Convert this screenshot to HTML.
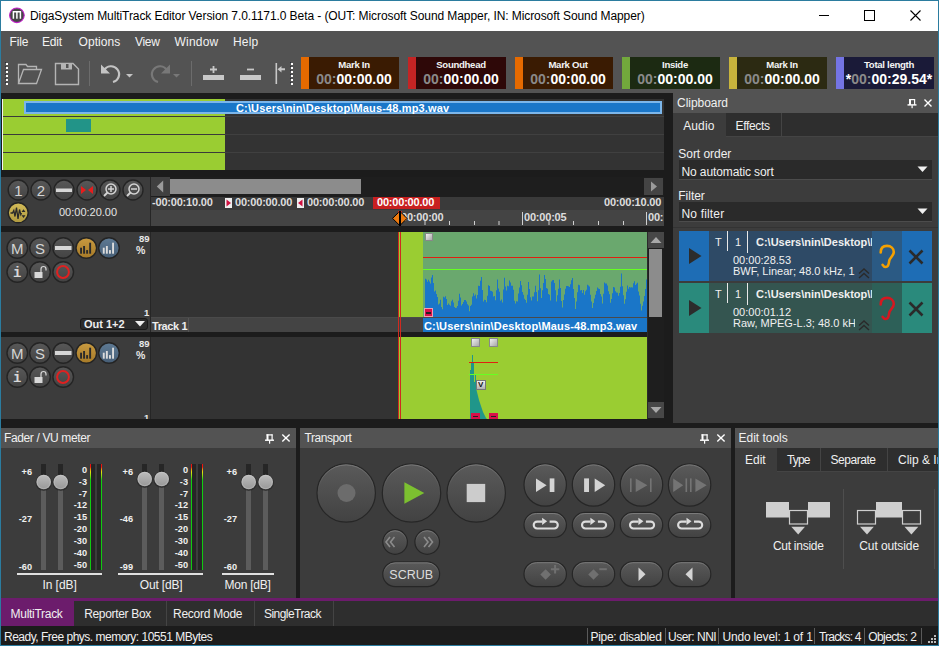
<!DOCTYPE html>
<html><head><meta charset="utf-8">
<style>
*{margin:0;padding:0;box-sizing:border-box}
html,body{width:939px;height:646px;overflow:hidden;background:#1c1c1c;font-family:"Liberation Sans",sans-serif;position:relative}
.a{position:absolute}
.t{position:absolute;white-space:nowrap;line-height:1}
.clab{font-size:9.6px;font-weight:bold;color:#f4f4f4;text-align:center;letter-spacing:-0.3px}
.ctim{font-size:14px;font-weight:bold;color:#fff;text-align:center}
.rl{font-size:11px;font-weight:bold;color:#dedede;letter-spacing:-0.2px}
.pct{font-size:9.5px;font-weight:bold;color:#e8e8e8}
.ci{font-size:11px;color:#f0f0f0}
.fl{font-size:9.2px;font-weight:bold;color:#f0f0f0}
</style></head><body>
<svg width="0" height="0" style="position:absolute"><defs>
 <linearGradient id="gb" x1="0" y1="0" x2="0" y2="1"><stop offset="0" stop-color="#585858"/><stop offset="1" stop-color="#434343"/></linearGradient>
 <linearGradient id="go" x1="0" y1="0" x2="0" y2="1"><stop offset="0" stop-color="#c89a40"/><stop offset="1" stop-color="#a67a28"/></linearGradient>
 <linearGradient id="gbl" x1="0" y1="0" x2="0" y2="1"><stop offset="0" stop-color="#5e7a94"/><stop offset="1" stop-color="#465e76"/></linearGradient>
</defs></svg>
<!-- title bar -->
<div class="a" style="left:1px;top:1px;width:937px;height:30px;background:#fff"></div>
<svg class="a" style="left:8px;top:6px" width="18" height="18" viewBox="0.1 -0.3 18 18">
 <circle cx="9" cy="9" r="7.3" fill="#474747" stroke="#c020c8" stroke-width="1.1"/>
 <path d="M5.5 12.5V5.5H12.5V12.5M9 5.5V12.5" stroke="#fff" stroke-width="1.5" fill="none"/>
</svg>
<div class="t" style="left:30px;top:10px;font-size:12px;letter-spacing:-0.08px;color:#000" id="ttl" >DigaSystem MultiTrack Editor Version 7.0.1171.0 Beta - (OUT: Microsoft Sound Mapper, IN: Microsoft Sound Mapper)</div>
<div class="a" style="left:819px;top:15px;width:10px;height:1px;background:#000"></div>
<div class="a" style="left:864px;top:10px;width:11px;height:11px;border:1px solid #000"></div>
<svg class="a" style="left:909px;top:9px" width="13" height="13" viewBox="0 0 13 13"><path d="M1.5 1.5L11.5 11.5M11.5 1.5L1.5 11.5" stroke="#000" stroke-width="1.1"/></svg>
<!-- menu + toolbar -->
<div class="a" style="left:1px;top:31px;width:937px;height:62px;background:#535353"></div>
<div class="t" style="left:9.5px;top:36px;font-size:12px;color:#f2f2f2;letter-spacing:-0.17px">File</div>
<div class="t" style="left:42.0px;top:36px;font-size:12px;color:#f2f2f2;letter-spacing:-0.17px">Edit</div>
<div class="t" style="left:78.5px;top:36px;font-size:12px;color:#f2f2f2;letter-spacing:0.08px">Options</div>
<div class="t" style="left:135.0px;top:36px;font-size:12px;color:#f2f2f2;letter-spacing:-0.33px">View</div>
<div class="t" style="left:174.5px;top:36px;font-size:12px;color:#f2f2f2;letter-spacing:0.2px">Window</div>
<div class="t" style="left:233.0px;top:36px;font-size:12px;color:#f2f2f2;letter-spacing:0.17px">Help</div>
<!-- toolbar icons -->
<svg class="a" style="left:0;top:52px" width="300" height="40" viewBox="0 52 300 40">
 <g fill="#fff"><rect x="6" y="63" width="2" height="2"/><rect x="6" y="67" width="2" height="2"/><rect x="6" y="71" width="2" height="2"/><rect x="6" y="75" width="2" height="2"/><rect x="6" y="79" width="2" height="2"/><rect x="6" y="83" width="2" height="2"/></g><g fill="#2a2e3a"><rect x="5" y="62" width="1" height="1"/><rect x="5" y="66" width="1" height="1"/><rect x="5" y="70" width="1" height="1"/><rect x="5" y="74" width="1" height="1"/><rect x="5" y="78" width="1" height="1"/><rect x="5" y="82" width="1" height="1"/></g>
 <path d="M18.5 83.5V64.5H26L27.5 66.5H36.5V69.5M18.5 83.5L23.5 69.5H41.5L36.5 83.5Z" fill="none" stroke="#b4b4b4" stroke-width="1.3"/>
 <path d="M55.5 63.5H73L78.5 69V84.5H55.5Z" fill="none" stroke="#b4b4b4" stroke-width="1.4"/>
 <rect x="61" y="63" width="11" height="6.5" fill="#b4b4b4"/><rect x="66" y="64" width="2.5" height="4" fill="#535353"/>
 <rect x="89" y="61" width="1" height="25" fill="#6c6c6c"/>
 <path d="M104 70.5A8 8 0 1 1 113 82" fill="none" stroke="#c4c4c4" stroke-width="2.2"/>
 <path d="M101 64.5V73.5H110Z" fill="#c4c4c4"/>
 <path d="M126 74H133L129.5 77.5Z" fill="#c4c4c4"/>
 <path d="M167 70.5A8 8 0 1 0 158 82" fill="none" stroke="#787878" stroke-width="2.2"/>
 <path d="M170 64.5V73.5H161Z" fill="#787878"/>
 <path d="M173 74H180L176.5 77.5Z" fill="#787878"/>
 <rect x="191" y="61" width="1" height="25" fill="#6c6c6c"/>
 <rect x="203" y="75" width="21" height="5" fill="#c8c8c8"/>
 <path d="M213.5 66V73M210 69.5H217" stroke="#c8c8c8" stroke-width="1.8"/>
 <rect x="240" y="75" width="21" height="5" fill="#c8c8c8"/>
 <path d="M247 69.5H254" stroke="#c8c8c8" stroke-width="1.8"/>
 <rect x="275.5" y="63" width="1.6" height="21" fill="#c8c8c8"/>
 <path d="M277.5 69.2L281.5 66V68.2H285V70.2H281.5V72.5Z" fill="#c8c8c8"/>
 <g fill="#fff"><rect x="291" y="63" width="2" height="2"/><rect x="291" y="67" width="2" height="2"/><rect x="291" y="71" width="2" height="2"/><rect x="291" y="75" width="2" height="2"/><rect x="291" y="79" width="2" height="2"/><rect x="291" y="83" width="2" height="2"/></g><g fill="#2a2e3a"><rect x="290" y="62" width="1" height="1"/><rect x="290" y="66" width="1" height="1"/><rect x="290" y="70" width="1" height="1"/><rect x="290" y="74" width="1" height="1"/><rect x="290" y="78" width="1" height="1"/><rect x="290" y="82" width="1" height="1"/></g>
</svg>

<div class="a" style="left:301px;top:57px;width:8px;height:32px;background:#e66a00"></div>
<div class="a" style="left:309px;top:57px;width:90px;height:32px;background:#3a1b02"></div>
<div class="t clab" style="left:309px;top:60px;width:90px;">Mark In</div>
<div class="t ctim" style="left:309px;top:72px;width:90px;"><span style="color:#8a8a8a">00:</span>00:00.00</div>
<div class="a" style="left:408px;top:57px;width:8px;height:32px;background:#c42424"></div>
<div class="a" style="left:416px;top:57px;width:90px;height:32px;background:#2e0808"></div>
<div class="t clab" style="left:416px;top:60px;width:90px;">Soundhead</div>
<div class="t ctim" style="left:416px;top:72px;width:90px;"><span style="color:#8a8a8a">00:</span>00:00.00</div>
<div class="a" style="left:515px;top:57px;width:8px;height:32px;background:#e66a00"></div>
<div class="a" style="left:523px;top:57px;width:90px;height:32px;background:#3a1b02"></div>
<div class="t clab" style="left:523px;top:60px;width:90px;">Mark Out</div>
<div class="t ctim" style="left:523px;top:72px;width:90px;"><span style="color:#8a8a8a">00:</span>00:00.00</div>
<div class="a" style="left:622px;top:57px;width:8px;height:32px;background:#72a83c"></div>
<div class="a" style="left:630px;top:57px;width:90px;height:32px;background:#1c2a12"></div>
<div class="t clab" style="left:630px;top:60px;width:90px;">Inside</div>
<div class="t ctim" style="left:630px;top:72px;width:90px;"><span style="color:#8a8a8a">00:</span>00:00.00</div>
<div class="a" style="left:729px;top:57px;width:8px;height:32px;background:#c8b43c"></div>
<div class="a" style="left:737px;top:57px;width:90px;height:32px;background:#2c2a12"></div>
<div class="t clab" style="left:737px;top:60px;width:90px;">Mark In</div>
<div class="t ctim" style="left:737px;top:72px;width:90px;"><span style="color:#8a8a8a">00:</span>00:00.00</div>
<div class="a" style="left:836px;top:57px;width:8px;height:32px;background:#7474e4"></div>
<div class="a" style="left:844px;top:57px;width:90px;height:32px;background:#1a1a38"></div>
<div class="t clab" style="left:844px;top:60px;width:90px;">Total length</div>
<div class="t ctim" style="left:844px;top:72px;width:90px;">*<span style="color:#8a8a8a">00:</span>00:29.54*</div>
<!-- overview -->
<div class="a" style="left:2px;top:99px;width:662px;height:71px;background:#333"></div>
<div class="a" style="left:2px;top:99px;width:1px;height:71px;background:#f4f4f4"></div>
<div class="a" style="left:3px;top:99px;width:222px;height:71px;background:#9acd32"></div>
<div class="a" style="left:3px;top:116px;width:222px;height:1px;background:#3a3a3a"></div>
<div class="a" style="left:3px;top:134px;width:222px;height:1px;background:#3a3a3a"></div>
<div class="a" style="left:3px;top:152px;width:222px;height:1px;background:#3a3a3a"></div>
<div class="a" style="left:225px;top:116px;width:439px;height:1px;background:#404040"></div>
<div class="a" style="left:225px;top:134px;width:439px;height:1px;background:#404040"></div>
<div class="a" style="left:225px;top:152px;width:439px;height:1px;background:#404040"></div>
<div class="a" style="left:24px;top:101px;width:638px;height:13px;background:#1a76c8;border:2px solid #7cb6ea"></div>
<div class="t" style="left:236px;top:102.5px;font-size:11px;font-weight:bold;color:#fff;letter-spacing:0.15px">C:\Users\nin\Desktop\Maus-48.mp3.wav</div>
<div class="a" style="left:66px;top:119px;width:25px;height:13px;background:#229488"></div>

<!-- control panel -->
<div class="a" style="left:1px;top:177px;width:149px;height:49px;background:#3c3c3c"></div>
<div class="a" style="left:150px;top:177px;width:1px;height:49px;background:#262626"></div>
<div class="a" style="left:151px;top:177px;width:513px;height:49px;background:#3c3c3c"></div>
<svg class="a" style="left:0;top:176px" width="150" height="50" viewBox="0 176 150 50">
 <defs>
  <linearGradient id="gb" x1="0" y1="0" x2="0" y2="1"><stop offset="0" stop-color="#585858"/><stop offset="1" stop-color="#434343"/></linearGradient>
  <linearGradient id="gy" x1="0" y1="0" x2="0" y2="1"><stop offset="0" stop-color="#d4bc58"/><stop offset="1" stop-color="#b09a40"/></linearGradient>
 </defs>
 <g stroke="#242424" stroke-width="1.4" fill="url(#gb)">
  <circle cx="18.2" cy="190" r="10"/><circle cx="41" cy="190" r="10"/><circle cx="64" cy="190" r="10"/><circle cx="87" cy="190" r="10"/><circle cx="110" cy="190" r="10"/><circle cx="133" cy="190" r="10"/>
  <circle cx="18.2" cy="212.8" r="10" fill="url(#gy)"/>
 </g>
 <text x="18.5" y="196" font-size="15" fill="#d4d4d4" text-anchor="middle" font-family="Liberation Sans">1</text>
 <text x="41" y="196" font-size="15" fill="#d4d4d4" text-anchor="middle" font-family="Liberation Sans">2</text>
 <rect x="56" y="188.5" width="16" height="3.5" fill="#d6d6d6"/>
 <path d="M81 186V194L86 190ZM93 186V194L88 190Z" fill="#e81c1c"/>
 <circle cx="111" cy="189" r="5" fill="none" stroke="#d4d4d4" stroke-width="1.5"/><path d="M107.5 192.5L104 196" stroke="#d4d4d4" stroke-width="1.8"/><path d="M111 186V192M108 189H114" stroke="#d4d4d4" stroke-width="1.5"/>
 <circle cx="134" cy="189" r="5" fill="none" stroke="#d4d4d4" stroke-width="1.5"/><path d="M130.5 192.5L127 196" stroke="#d4d4d4" stroke-width="1.8"/><path d="M131 189H137" stroke="#d4d4d4" stroke-width="1.5"/>
 <path d="M10.5 213L12.5 213L13.8 210.5L15 216.5L16.5 207.5L18 219L19.5 209.5L20.8 214.5L21.5 213" fill="none" stroke="#2a2a2a" stroke-width="1.3"/>
 <path d="M21.5 212L23.5 209.2L25.5 212ZM21.5 215.2L23.5 218L25.5 215.2Z" fill="#2a2a2a"/>
</svg>
<div class="t" style="left:59px;top:207px;font-size:11px;color:#e4e4e4">00:00:20.00</div>
<!-- timeline scroll -->
<div class="a" style="left:151px;top:177px;width:513px;height:20px;background:#1e1e1e"></div>
<div class="a" style="left:151px;top:177px;width:19px;height:19px;background:#404040"></div>
<svg class="a" style="left:151px;top:177px" width="19" height="19"><path d="M12.2 3.6V15.4L5.8 9.5Z" fill="#9a9a9a"/></svg>
<div class="a" style="left:170px;top:179px;width:191px;height:15px;background:#8c8c8c"></div>
<div class="a" style="left:644px;top:178px;width:19px;height:17px;background:#444"></div>
<svg class="a" style="left:644px;top:178px" width="19" height="17"><path d="M7 3.5V13.5L13 8.5Z" fill="#9a9a9a"/></svg>
<!-- ruler -->
<div class="a" style="left:151px;top:197px;width:513px;height:13px;background:#3a3a3a"></div>
<div class="a" style="left:151px;top:210px;width:513px;height:16px;background:#444"></div>
<div class="t rl" style="left:152px;top:197px">-00:00:10.00</div>
<div class="a" style="left:225px;top:198px;width:7px;height:10px;background:#eee"></div>
<svg class="a" style="left:225px;top:198px" width="7" height="10"><path d="M1.5 1.5V8.5L6 5Z" fill="#d01040"/></svg>
<div class="t rl" style="left:235px;top:197px">00:00:00.00</div>
<div class="a" style="left:297px;top:198px;width:7px;height:10px;background:#eee"></div>
<svg class="a" style="left:297px;top:198px" width="7" height="10"><path d="M5.5 1.5V8.5L1 5Z" fill="#d01040"/></svg>
<div class="t rl" style="left:307px;top:197px">00:00:00.00</div>
<div class="a" style="left:373px;top:197px;width:67px;height:12px;background:#c82020"></div>
<div class="t rl" style="left:377px;top:197px;color:#fff">00:00:00.00</div>
<div class="t rl" style="left:604px;top:197px">00:00:10.00</div>
<div class="t rl" style="left:401px;top:212px">00:00:00</div>
<div class="t rl" style="left:524px;top:212px">00:00:05</div>
<div class="t rl" style="left:648px;top:212px">00:</div>
<svg class="a" style="left:151px;top:211px" width="513" height="15" viewBox="151 211 513 15">
 <g fill="#d0d0d0">
  <rect x="522" y="212" width="1" height="13"/><rect x="646" y="212" width="1" height="13"/>
  <rect x="424.5" y="221" width="1" height="4"/><rect x="449" y="221" width="1" height="4"/><rect x="474" y="221" width="1" height="4"/><rect x="498.5" y="221" width="1" height="4"/>
  <rect x="548.5" y="221" width="1" height="4"/><rect x="573" y="221" width="1" height="4"/><rect x="598" y="221" width="1" height="4"/><rect x="623" y="221" width="1" height="4"/>
 </g>
 <path d="M392.5 218.4L399.8 211.2L407 218.4L399.8 225.6Z" fill="#ec7a10" stroke="#000" stroke-width="1"/>
 <rect x="399" y="211" width="2" height="15" fill="#000"/><rect x="398" y="211" width="1" height="1.5" fill="#d02a20"/><rect x="401" y="211" width="1" height="1.5" fill="#d02a20"/>
</svg>

<div class="a" style="left:1px;top:232px;width:149px;height:100px;background:#3c3c3c"></div>
<div class="a" style="left:150px;top:232px;width:1px;height:100px;background:#262626"></div>
<svg class="a" style="left:0;top:236px" width="150" height="50" viewBox="0 236 150 50">
<g stroke="#242424" stroke-width="1.4">
<circle cx="17.3" cy="248" r="10.3" fill="url(#gb)"/>
<circle cx="40" cy="248" r="10.3" fill="url(#gb)"/>
<circle cx="63.2" cy="248" r="10.3" fill="url(#gb)"/>
<circle cx="86.3" cy="248" r="10.3" fill="url(#go)"/>
<circle cx="109" cy="248" r="10.3" fill="url(#gbl)"/>
<circle cx="17.3" cy="272" r="10.3" fill="url(#gb)"/>
<circle cx="40" cy="272" r="10.3" fill="url(#gb)"/>
<circle cx="63.2" cy="272" r="10.3" fill="url(#gb)"/>
</g>
<text x="17.3" y="253.5" font-size="15" fill="#d4d4d4" text-anchor="middle" font-family="Liberation Sans">M</text>
<text x="40" y="253.5" font-size="15" fill="#d4d4d4" text-anchor="middle" font-family="Liberation Sans">S</text>
<rect x="55" y="246" width="16.5" height="4" fill="#d6d6d6"/>
<rect x="80.10" y="247.70" width="1.9" height="6" fill="#2a2a2a"/>
<rect x="83.13" y="246.00" width="1.9" height="7.7" fill="#2a2a2a"/>
<rect x="86.16" y="250.10" width="1.9" height="3.6" fill="#2a2a2a"/>
<rect x="89.19" y="242.70" width="1.9" height="11" fill="#2a2a2a"/>
<rect x="102.80" y="247.70" width="1.9" height="6" fill="#dcdcdc"/>
<rect x="105.90" y="246.00" width="1.9" height="7.7" fill="#dcdcdc"/>
<rect x="109.00" y="250.10" width="1.9" height="3.6" fill="#dcdcdc"/>
<rect x="112.10" y="242.70" width="1.9" height="11" fill="#dcdcdc"/>
<text x="17.3" y="277" font-size="14" font-weight="bold" fill="#d8d8d8" text-anchor="middle" font-family="Liberation Mono">i</text>
<rect x="34.5" y="272" width="8" height="6" fill="#d8d8d8"/><path d="M41 272V269A2.5 2.5 0 0 1 46 269V270.5" fill="none" stroke="#d8d8d8" stroke-width="1.2"/>
<circle cx="63" cy="272" r="5.9" fill="none" stroke="#e02020" stroke-width="2"/>
</svg>
<div class="t pct" style="left:139px;top:234px">89</div>
<div class="t pct" style="left:136px;top:244.5px;font-size:10.5px">%</div>
<div class="t pct" style="left:144px;top:308px">1</div>
<div class="a" style="left:151px;top:232px;width:497px;height:86px;background:#333"></div>
<div class="a" style="left:151px;top:317px;width:497px;height:1px;background:#4a4a4a"></div>
<div class="a" style="left:151px;top:318px;width:497px;height:14px;background:#444"></div>
<div class="a" style="left:188px;top:318px;width:1px;height:14px;background:#555"></div>
<div class="t" style="left:152px;top:321px;font-size:11px;font-weight:bold;color:#eee;letter-spacing:-0.4px">Track 1</div>
<div class="a" style="left:80px;top:318px;width:68px;height:12px;background:#2c2c2c;border:1px solid #1a1a1a;border-radius:3px"></div>
<div class="t" style="left:84px;top:319px;font-size:11px;font-weight:bold;color:#eee">Out 1+2</div>
<svg class="a" style="left:134px;top:320px" width="12" height="8"><path d="M1 1H11L6 6.5Z" fill="#eee"/></svg>
<div class="a" style="left:399px;top:232px;width:24px;height:85px;background:#9acd32"></div>
<div class="a" style="left:423px;top:232px;width:224px;height:85px;background:#6aa86e"></div>
<div class="a" style="left:423px;top:257px;width:224px;height:1px;background:#e02010"></div>
<div class="a" style="left:423px;top:269px;width:224px;height:1px;background:#66ff22"></div>
<svg class="a" style="left:0;top:0" width="939" height="646" viewBox="0 0 939 646"><path d="M425 317L425 278.8L426 278.8L426 279.6L427 279.6L427 281.8L428 281.8L428 279.8L429 279.8L429 281.5L430 281.5L430 283.4L431 283.4L431 277.4L432 277.4L432 275.1L433 275.1L433 283.1L434 283.1L434 291.5L435 291.5L435 290.5L436 290.5L436 294.0L437 294.0L437 297.0L438 297.0L438 304.5L439 304.5L439 303.5L440 303.5L440 299.7L441 299.7L441 306.9L442 306.9L442 309.3L443 309.3L443 296.8L444 296.8L444 297.6L445 297.6L445 296.3L446 296.3L446 299.1L447 299.1L447 305.1L448 305.1L448 303.5L449 303.5L449 304.8L450 304.8L450 305.7L451 305.7L451 301.2L452 301.2L452 299.8L453 299.8L453 302.4L454 302.4L454 307.0L455 307.0L455 308.1L456 308.1L456 307.7L457 307.7L457 306.0L458 306.0L458 300.8L459 300.8L459 293.8L460 293.8L460 297.4L461 297.4L461 305.5L462 305.5L462 304.1L463 304.1L463 302.0L464 302.0L464 300.0L465 300.0L465 300.1L466 300.1L466 301.6L467 301.6L467 304.3L468 304.3L468 305.5L469 305.5L469 311.3L470 311.3L470 306.0L471 306.0L471 304.7L472 304.7L472 296.4L473 296.4L473 293.3L474 293.3L474 295.7L475 295.7L475 294.5L476 294.5L476 298.5L477 298.5L477 295.1L478 295.1L478 285.8L479 285.8L479 286.1L480 286.1L480 280.8L481 280.8L481 276.9L482 276.9L482 290.1L483 290.1L483 301.4L484 301.4L484 299.8L485 299.8L485 299.9L486 299.9L486 302.2L487 302.2L487 295.8L488 295.8L488 285.3L489 285.3L489 286.1L490 286.1L490 290.7L491 290.7L491 291.0L492 291.0L492 291.8L493 291.8L493 296.5L494 296.5L494 295.9L495 295.9L495 300.3L496 300.3L496 290.2L497 290.2L497 279.5L498 279.5L498 288.5L499 288.5L499 291.8L500 291.8L500 300.7L501 300.7L501 299.6L502 299.6L502 302.6L503 302.6L503 289.6L504 289.6L504 277.8L505 277.8L505 286.4L506 286.4L506 290.5L507 290.5L507 285.7L508 285.7L508 286.3L509 286.3L509 280.6L510 280.6L510 282.5L511 282.5L511 285.8L512 285.8L512 285.7L513 285.7L513 289.7L514 289.7L514 300.8L515 300.8L515 303.6L516 303.6L516 301.3L517 301.3L517 301.4L518 301.4L518 293.5L519 293.5L519 287.6L520 287.6L520 280.9L521 280.9L521 285.3L522 285.3L522 292.1L523 292.1L523 294.7L524 294.7L524 298.8L525 298.8L525 300.0L526 300.0L526 302.8L527 302.8L527 294.8L528 294.8L528 281.9L529 281.9L529 289.0L530 289.0L530 297.2L531 297.2L531 300.4L532 300.4L532 296.5L533 296.5L533 296.5L534 296.5L534 292.3L535 292.3L535 285.7L536 285.7L536 291.9L537 291.9L537 301.2L538 301.2L538 290.2L539 290.2L539 274.5L540 274.5L540 288.3L541 288.3L541 297.9L542 297.9L542 290.2L543 290.2L543 282.9L544 282.9L544 275.0L545 275.0L545 279.0L546 279.0L546 288.0L547 288.0L547 288.7L548 288.7L548 294.0L549 294.0L549 294.8L550 294.8L550 300.6L551 300.6L551 281.5L552 281.5L552 280.3L553 280.3L553 280.0L554 280.0L554 283.1L555 283.1L555 290.3L556 290.3L556 301.6L557 301.6L557 295.3L558 295.3L558 288.8L559 288.8L559 279.6L560 279.6L560 287.9L561 287.9L561 301.1L562 301.1L562 307.5L563 307.5L563 299.9L564 299.9L564 294.5L565 294.5L565 288.7L566 288.7L566 286.1L567 286.1L567 286.0L568 286.0L568 286.3L569 286.3L569 286.9L570 286.9L570 284.2L571 284.2L571 280.3L572 280.3L572 278.0L573 278.0L573 289.1L574 289.1L574 298.1L575 298.1L575 309.0L576 309.0L576 301.4L577 301.4L577 292.2L578 292.2L578 284.7L579 284.7L579 285.3L580 285.3L580 290.4L581 290.4L581 290.0L582 290.0L582 293.0L583 293.0L583 289.9L584 289.9L584 294.7L585 294.7L585 291.2L586 291.2L586 289.7L587 289.7L587 284.8L588 284.8L588 285.5L589 285.5L589 286.6L590 286.6L590 294.7L591 294.7L591 301.4L592 301.4L592 308.0L593 308.0L593 302.9L594 302.9L594 298.5L595 298.5L595 294.7L596 294.7L596 291.1L597 291.1L597 287.6L598 287.6L598 288.6L599 288.6L599 289.0L600 289.0L600 293.9L601 293.9L601 296.6L602 296.6L602 303.5L603 303.5L603 293.8L604 293.8L604 282.4L605 282.4L605 283.6L606 283.6L606 283.4L607 283.4L607 285.4L608 285.4L608 291.2L609 291.2L609 294.2L610 294.2L610 302.7L611 302.7L611 299.1L612 299.1L612 293.2L613 293.2L613 287.1L614 287.1L614 287.4L615 287.4L615 291.2L616 291.2L616 292.4L617 292.4L617 292.7L618 292.7L618 295.7L619 295.7L619 292.9L620 292.9L620 286.8L621 286.8L621 273.6L622 273.6L622 286.2L623 286.2L623 295.2L624 295.2L624 303.7L625 303.7L625 299.3L626 299.3L626 291.7L627 291.7L627 285.6L628 285.6L628 288.8L629 288.8L629 287.1L630 287.1L630 287.6L631 287.6L631 287.3L632 287.3L632 287.4L633 287.4L633 283.3L634 283.3L634 281.3L635 281.3L635 285.0L636 285.0L636 283.8L637 283.8L637 282.7L638 282.7L638 291.6L639 291.6L639 295.5L640 295.5L640 303.8L641 303.8L641 310.5L642 310.5L642 305.7L643 305.7L643 301.5L644 301.5L644 296.1L645 296.1L645 288.9L646 288.9L646 279.4L647 279.4L647 317Z" fill="#1a76c8"/></svg>
<div class="a" style="left:425px;top:233px;width:8px;height:8px;background:linear-gradient(135deg,#f0f0f0,#a8a8a8);border:1px solid #888"></div>
<div class="a" style="left:424px;top:308px;width:9px;height:9px;background:#d8104a;border:1px solid #f0a0b0"></div>
<div class="a" style="left:426px;top:312px;width:5px;height:1.5px;background:#222"></div>
<div class="a" style="left:423px;top:318px;width:224px;height:14px;background:#1a76c8"></div>
<div class="t" style="left:424px;top:320.5px;font-size:11px;font-weight:bold;color:#fff;letter-spacing:0.15px">C:\Users\nin\Desktop\Maus-48.mp3.wav</div>
<div class="a" style="left:647px;top:232px;width:1px;height:187px;background:#2a2a2a"></div>
<div class="a" style="left:648px;top:232px;width:16px;height:187px;background:#1e1e1e"></div>
<div class="a" style="left:648px;top:232px;width:16px;height:16px;background:#474747"></div>
<svg class="a" style="left:648px;top:232px" width="16" height="16"><path d="M2.5 11H13.5L8 5Z" fill="#a8a8a8"/></svg>
<div class="a" style="left:649px;top:249px;width:13px;height:68px;background:#8c8c8c"></div>
<div class="a" style="left:648px;top:402px;width:16px;height:16px;background:#474747"></div>
<svg class="a" style="left:648px;top:402px" width="16" height="16"><path d="M2.5 5H13.5L8 11Z" fill="#a8a8a8"/></svg>
<div class="a" style="left:1px;top:337px;width:149px;height:82px;background:#3c3c3c"></div>
<div class="a" style="left:150px;top:337px;width:1px;height:82px;background:#262626"></div>
<svg class="a" style="left:0;top:341px" width="150" height="50" viewBox="0 341 150 50">
<g stroke="#242424" stroke-width="1.4">
<circle cx="17.3" cy="353" r="10.3" fill="url(#gb)"/>
<circle cx="40" cy="353" r="10.3" fill="url(#gb)"/>
<circle cx="63.2" cy="353" r="10.3" fill="url(#gb)"/>
<circle cx="86.3" cy="353" r="10.3" fill="url(#go)"/>
<circle cx="109" cy="353" r="10.3" fill="url(#gbl)"/>
<circle cx="17.3" cy="377" r="10.3" fill="url(#gb)"/>
<circle cx="40" cy="377" r="10.3" fill="url(#gb)"/>
<circle cx="63.2" cy="377" r="10.3" fill="url(#gb)"/>
</g>
<text x="17.3" y="358.5" font-size="15" fill="#d4d4d4" text-anchor="middle" font-family="Liberation Sans">M</text>
<text x="40" y="358.5" font-size="15" fill="#d4d4d4" text-anchor="middle" font-family="Liberation Sans">S</text>
<rect x="55" y="351" width="16.5" height="4" fill="#d6d6d6"/>
<rect x="80.10" y="352.70" width="1.9" height="6" fill="#2a2a2a"/>
<rect x="83.13" y="351.00" width="1.9" height="7.7" fill="#2a2a2a"/>
<rect x="86.16" y="355.10" width="1.9" height="3.6" fill="#2a2a2a"/>
<rect x="89.19" y="347.70" width="1.9" height="11" fill="#2a2a2a"/>
<rect x="102.80" y="352.70" width="1.9" height="6" fill="#dcdcdc"/>
<rect x="105.90" y="351.00" width="1.9" height="7.7" fill="#dcdcdc"/>
<rect x="109.00" y="355.10" width="1.9" height="3.6" fill="#dcdcdc"/>
<rect x="112.10" y="347.70" width="1.9" height="11" fill="#dcdcdc"/>
<text x="17.3" y="382" font-size="14" font-weight="bold" fill="#d8d8d8" text-anchor="middle" font-family="Liberation Mono">i</text>
<rect x="34.5" y="377" width="8" height="6" fill="#d8d8d8"/><path d="M41 377V374A2.5 2.5 0 0 1 46 374V375.5" fill="none" stroke="#d8d8d8" stroke-width="1.2"/>
<circle cx="63" cy="377" r="5.9" fill="none" stroke="#e02020" stroke-width="2"/>
</svg>
<div class="t pct" style="left:139px;top:339px">89</div>
<div class="t pct" style="left:136px;top:349.5px;font-size:10.5px">%</div>
<div class="t pct" style="left:144px;top:413px">1</div>
<div class="a" style="left:151px;top:337px;width:496px;height:82px;background:#333"></div>
<div class="a" style="left:399px;top:337px;width:248px;height:82px;background:#9acd32"></div>
<div class="a" style="left:398px;top:232px;width:1px;height:187px;background:#d02a20"></div>
<div class="a" style="left:400px;top:232px;width:1px;height:187px;background:#d02a20"></div>
<div class="a" style="left:471px;top:338px;width:9px;height:9px;background:linear-gradient(135deg,#f0f0f0,#a8a8a8);border:1px solid #888"></div>
<div class="a" style="left:489px;top:338px;width:9px;height:9px;background:linear-gradient(135deg,#f0f0f0,#a8a8a8);border:1px solid #888"></div>
<svg class="a" style="left:0;top:0" width="939" height="646" viewBox="0 0 939 646"><path d="M470 419L470 370L471 370L471 362L472 362L472 355L473 355L473 362L474 362L474 382L475 382L475 375L476 375L476 388L477 392L478 396L479 400L480 403L481 406L482 409L483 412L484 414L485 416L486 418L487 419Z" fill="#20968a"/></svg>
<div class="a" style="left:469px;top:362px;width:29px;height:1px;background:#e02010"></div>
<div class="a" style="left:469px;top:374px;width:29px;height:1px;background:#66ff22"></div>
<div class="a" style="left:476px;top:380px;width:10px;height:10px;background:linear-gradient(180deg,#f0f0f0,#b0b0b0);border:1px solid #777"></div>
<div class="t" style="left:478px;top:381px;font-size:8px;font-weight:bold;color:#111">V</div>
<div class="a" style="left:471px;top:413px;width:9px;height:6px;background:#d8104a"></div>
<div class="a" style="left:489px;top:413px;width:9px;height:6px;background:#d8104a"></div>
<div class="a" style="left:473px;top:416px;width:5px;height:1px;background:#222"></div>
<div class="a" style="left:491px;top:416px;width:5px;height:1px;background:#222"></div>
<!-- clipboard panel -->
<div class="a" style="left:664px;top:93px;width:9px;height:334px;background:#1c1c1c"></div>
<div class="a" style="left:673px;top:93px;width:265px;height:20px;background:#535353"></div>
<div class="t" style="left:677.0px;top:97px;font-size:12px;color:#f0f0f0;letter-spacing:-0.04px">Clipboard</div>
<svg class="a" style="left:906px;top:97px" width="30" height="12" viewBox="906 97 30 12">
 <g fill="#fff"><rect x="909" y="99" width="2" height="6"/><rect x="909" y="99" width="6" height="1.2"/><rect x="914" y="99" width="1.2" height="6"/><rect x="907.5" y="104.2" width="9" height="1.4"/><rect x="911.5" y="105.2" width="1.2" height="3"/></g>
 <path d="M924.5 99.5L931.5 106.5M931.5 99.5L924.5 106.5" stroke="#fff" stroke-width="1.4"/>
</svg>
<div class="a" style="left:673px;top:113px;width:265px;height:310px;background:#3c3c3c"></div>
<div class="a" style="left:726px;top:113px;width:212px;height:24px;background:#2e2e2e"></div>
<div class="a" style="left:726px;top:136px;width:212px;height:1px;background:#444"></div>
<div class="a" style="left:781px;top:113px;width:1px;height:23px;background:#444"></div>
<div class="t" style="left:683.2px;top:120px;font-size:12px;color:#f0f0f0;letter-spacing:0.12px">Audio</div>
<div class="t" style="left:735.6px;top:120px;font-size:12px;color:#f0f0f0;letter-spacing:-0.35px">Effects</div>
<div class="t" style="left:678.3px;top:148px;font-size:12px;color:#f0f0f0;letter-spacing:-0.04px">Sort order</div>
<div class="a" style="left:679px;top:160px;width:253px;height:20px;background:#2a2a2a;border-bottom:1px solid #4c4c4c"></div>
<div class="t" style="left:681.5px;top:166px;font-size:12px;color:#f0f0f0;letter-spacing:-0.11px">No automatic sort</div>
<svg class="a" style="left:917px;top:166px" width="11" height="7"><path d="M0.5 0.5H10.5L5.5 6Z" fill="#f0f0f0"/></svg>
<div class="t" style="left:678.3px;top:190px;font-size:12px;color:#f0f0f0;letter-spacing:-0.02px">Filter</div>
<div class="a" style="left:679px;top:202px;width:253px;height:20px;background:#2a2a2a;border-bottom:1px solid #4c4c4c"></div>
<div class="t" style="left:681.5px;top:208px;font-size:12px;color:#f0f0f0;letter-spacing:0.17px">No filter</div>
<svg class="a" style="left:917px;top:208px" width="11" height="7"><path d="M0.5 0.5H10.5L5.5 6Z" fill="#f0f0f0"/></svg>
<div class="a" style="left:673px;top:227px;width:265px;height:1px;background:#333"></div>
<!-- item 1 -->
<div class="a" style="left:679px;top:231px;width:253px;height:50px;background:#2e4a66;overflow:hidden">
 <div class="a" style="left:0;top:0;width:30px;height:50px;background:#1e6db5"></div>
 <svg class="a" style="left:10px;top:17px" width="13" height="16"><path d="M0 0V16L12.5 8Z" fill="#2c2c2c"/></svg>
 <div class="t ci" style="left:36px;top:6px">T</div>
 <div class="a" style="left:48px;top:0;width:1px;height:20px;background:#e8e8e8"></div>
 <div class="t ci" style="left:56px;top:6px">1</div>
 <div class="a" style="left:68px;top:0;width:1px;height:22px;background:#e8e8e8"></div>
 <div class="t ci" style="left:77px;top:6px;font-weight:bold;letter-spacing:0px">C:\Users\nin\Desktop\Maus</div>
 <div class="t ci" style="left:54px;top:24px">00:00:28.53</div>
 <div class="a" style="left:54px;top:33px;width:122px;height:14px;overflow:hidden"><div class="t ci" style="left:0;top:2px">BWF, Linear; 48.0 kHz, 1</div></div>
 <div class="a" style="left:193px;top:0;width:30px;height:50px;background:#2b5a84"></div>
 <div class="a" style="left:223px;top:0;width:30px;height:50px;background:#1e6db5"></div>
 <svg class="a" style="left:178px;top:36px" width="14" height="12"><path d="M2 6.5L7 2L12 6.5M2 11L7 6.5L12 11" fill="none" stroke="#2a2a2a" stroke-width="1.4"/></svg>
 <svg class="a" style="left:0;top:0" width="253" height="50"><path d="M201.7 21.5C201.7 16.5 205 14.9 208 14.9C212 14.9 214.8 17.5 214.8 20.9C214.8 24.5 211 26.5 210.3 29.5C209.8 32 209.8 36 206.9 36C205.5 36 204.3 35 203.6 33.8" fill="none" stroke="#f4a000" stroke-width="2.6" stroke-linecap="round"/></svg>
 <svg class="a" style="left:229px;top:18px" width="16" height="16"><path d="M1.5 1.5L14.5 14.5M14.5 1.5L1.5 14.5" stroke="#2a2a2a" stroke-width="2.6"/></svg>
</div>
<!-- item 2 -->
<div class="a" style="left:679px;top:283px;width:253px;height:50px;background:#345550;overflow:hidden">
 <div class="a" style="left:0;top:0;width:30px;height:50px;background:#2a8a7c"></div>
 <svg class="a" style="left:10px;top:17px" width="13" height="16"><path d="M0 0V16L12.5 8Z" fill="#2c2c2c"/></svg>
 <div class="t ci" style="left:36px;top:6px">T</div>
 <div class="a" style="left:48px;top:0;width:1px;height:20px;background:#e8e8e8"></div>
 <div class="t ci" style="left:56px;top:6px">1</div>
 <div class="a" style="left:68px;top:0;width:1px;height:22px;background:#e8e8e8"></div>
 <div class="t ci" style="left:77px;top:6px;font-weight:bold;letter-spacing:0px">C:\Users\nin\Desktop\Maus</div>
 <div class="t ci" style="left:54px;top:24px">00:00:01.12</div>
 <div class="a" style="left:54px;top:33px;width:122px;height:14px;overflow:hidden"><div class="t ci" style="left:0;top:2px">Raw, MPEG-L.3; 48.0 kHz</div></div>
 <div class="a" style="left:193px;top:0;width:30px;height:50px;background:#2d6058"></div>
 <div class="a" style="left:223px;top:0;width:30px;height:50px;background:#2a8a7c"></div>
 <svg class="a" style="left:178px;top:36px" width="14" height="12"><path d="M2 6.5L7 2L12 6.5M2 11L7 6.5L12 11" fill="none" stroke="#2a2a2a" stroke-width="1.4"/></svg>
 <svg class="a" style="left:0;top:0" width="253" height="50"><path d="M201.7 21.5C201.7 16.5 205 14.9 208 14.9C212 14.9 214.8 17.5 214.8 20.9C214.8 24.5 211 26.5 210.3 29.5C209.8 32 209.8 36 206.9 36C205.5 36 204.3 35 203.6 33.8" fill="none" stroke="#d41820" stroke-width="2.6" stroke-linecap="round"/></svg>
 <svg class="a" style="left:229px;top:18px" width="16" height="16"><path d="M1.5 1.5L14.5 14.5M14.5 1.5L1.5 14.5" stroke="#2a2a2a" stroke-width="2.6"/></svg>
</div>

<div class="a" style="left:1px;top:428px;width:295px;height:170px;background:#3c3c3c"></div>
<div class="a" style="left:1px;top:428px;width:295px;height:20px;background:#535353"></div>
<div class="t" style="left:4.0px;top:432px;font-size:12px;color:#f0f0f0;letter-spacing:-0.37px">Fader / VU meter</div>
<svg class="a" style="left:264px;top:431px" width="30" height="14" viewBox="0 0 30 14"><g fill="#fff"><rect x="2.5" y="3.3" width="2" height="6"/><rect x="2.5" y="3.3" width="6" height="1.2"/><rect x="7.5" y="3.3" width="1.2" height="6"/><rect x="1" y="8.5" width="9" height="1.4"/><rect x="5" y="9.5" width="1.2" height="3.2"/></g><path d="M18.3 3.6L25.6 10.6M25.6 3.6L18.3 10.6" stroke="#fff" stroke-width="1.4"/></svg>
<div class="a" style="left:300px;top:428px;width:431px;height:170px;background:#3c3c3c"></div>
<div class="a" style="left:300px;top:428px;width:431px;height:20px;background:#535353"></div>
<div class="t" style="left:304.5px;top:432px;font-size:12px;color:#f0f0f0;letter-spacing:-0.45px">Transport</div>
<svg class="a" style="left:699px;top:431px" width="30" height="14" viewBox="0 0 30 14"><g fill="#fff"><rect x="2.5" y="3.3" width="2" height="6"/><rect x="2.5" y="3.3" width="6" height="1.2"/><rect x="7.5" y="3.3" width="1.2" height="6"/><rect x="1" y="8.5" width="9" height="1.4"/><rect x="5" y="9.5" width="1.2" height="3.2"/></g><path d="M18.3 3.6L25.6 10.6M25.6 3.6L18.3 10.6" stroke="#fff" stroke-width="1.4"/></svg>
<div class="a" style="left:735px;top:428px;width:203px;height:170px;background:#3c3c3c"></div>
<div class="a" style="left:735px;top:428px;width:203px;height:20px;background:#535353"></div>
<div class="t" style="left:738.5px;top:432px;font-size:12px;color:#f0f0f0;letter-spacing:-0.01px">Edit tools</div>
<div class="a" style="left:296px;top:428px;width:4px;height:170px;background:#1c1c1c"></div>
<div class="a" style="left:1px;top:419px;width:663px;height:9px;background:#1c1c1c"></div>
<div class="a" style="left:731px;top:428px;width:4px;height:170px;background:#1c1c1c"></div>
<div class="t fl" style="left:12px;top:467.5px;width:20px;text-align:right">+6</div>
<div class="t fl" style="left:12px;top:515px;width:20px;text-align:right">-27</div>
<div class="t fl" style="left:12px;top:562.5px;width:20px;text-align:right">-60</div>
<div class="a" style="left:41px;top:464px;width:5px;height:106px;background:#5c5c5c"></div>
<div class="a" style="left:41px;top:464px;width:5px;height:18px;background:#262626"></div>
<div class="a" style="left:58px;top:464px;width:5px;height:106px;background:#5c5c5c"></div>
<div class="a" style="left:58px;top:464px;width:5px;height:18px;background:#262626"></div>
<svg class="a" style="left:30px;top:470px" width="45" height="26"><defs><linearGradient id="kn0" x1="0" y1="0" x2="0" y2="1"><stop offset="0" stop-color="#bdbdbd"/><stop offset="1" stop-color="#979797"/></linearGradient></defs><circle cx="13.7" cy="12.6" r="8.3" fill="#262626" opacity="0.7"/><circle cx="30.7" cy="12.6" r="8.3" fill="#262626" opacity="0.7"/><circle cx="13.7" cy="12" r="7.3" fill="url(#kn0)"/><circle cx="30.7" cy="12" r="7.3" fill="url(#kn0)"/><circle cx="13.7" cy="12" r="6.6" fill="none" stroke="#cfcfcf" stroke-opacity="0.5" stroke-width="0.8"/><circle cx="30.7" cy="12" r="6.6" fill="none" stroke="#cfcfcf" stroke-opacity="0.5" stroke-width="0.8"/></svg>
<div class="t fl" style="left:59px;top:465.6px;width:28px;text-align:right">0</div>
<div class="t fl" style="left:59px;top:477.5px;width:28px;text-align:right">-3</div>
<div class="t fl" style="left:59px;top:489.5px;width:28px;text-align:right">-7</div>
<div class="t fl" style="left:59px;top:501.4px;width:28px;text-align:right">-12</div>
<div class="t fl" style="left:59px;top:513.4px;width:28px;text-align:right">-15</div>
<div class="t fl" style="left:59px;top:525.3px;width:28px;text-align:right">-20</div>
<div class="t fl" style="left:59px;top:537.2px;width:28px;text-align:right">-30</div>
<div class="t fl" style="left:59px;top:549.2px;width:28px;text-align:right">-40</div>
<div class="t fl" style="left:59px;top:561.1px;width:28px;text-align:right">-50</div>
<div class="a" style="left:89px;top:464px;width:14px;height:106px;background:#3c3c3c"></div>
<div class="a" style="left:89.6px;top:464px;width:1.7px;height:106px;background:linear-gradient(180deg,#f01010 0,#f01010 3px,#f08010 5px,#e8e010 8px,#80e010 12px,#10d010 16px,#10c810 100%)"></div>
<div class="a" style="left:100.7px;top:464px;width:1.7px;height:106px;background:linear-gradient(180deg,#f01010 0,#f01010 3px,#f08010 5px,#e8e010 8px,#80e010 12px,#10d010 16px,#10c810 100%)"></div>
<div class="a" style="left:91.2px;top:464px;width:3.7px;height:106px;background:#262626"></div>
<div class="a" style="left:97px;top:464px;width:3.7px;height:106px;background:#262626"></div>
<div class="a" style="left:17px;top:573px;width:85px;height:1.5px;background:#e0e0e0"></div>
<div class="t" style="left:17.1px;top:579px;width:85px;text-align:center;font-size:12px;color:#f0f0f0;letter-spacing:-0.07px">In [dB]</div>
<div class="t fl" style="left:113px;top:467.5px;width:20px;text-align:right">+6</div>
<div class="t fl" style="left:113px;top:515px;width:20px;text-align:right">-46</div>
<div class="t fl" style="left:113px;top:562.5px;width:20px;text-align:right">-99</div>
<div class="a" style="left:142px;top:464px;width:5px;height:106px;background:#5c5c5c"></div>
<div class="a" style="left:142px;top:464px;width:5px;height:15px;background:#262626"></div>
<div class="a" style="left:159px;top:464px;width:5px;height:106px;background:#5c5c5c"></div>
<div class="a" style="left:159px;top:464px;width:5px;height:15px;background:#262626"></div>
<svg class="a" style="left:131px;top:467px" width="45" height="26"><defs><linearGradient id="kn101" x1="0" y1="0" x2="0" y2="1"><stop offset="0" stop-color="#bdbdbd"/><stop offset="1" stop-color="#979797"/></linearGradient></defs><circle cx="13.7" cy="12.6" r="8.3" fill="#262626" opacity="0.7"/><circle cx="30.7" cy="12.6" r="8.3" fill="#262626" opacity="0.7"/><circle cx="13.7" cy="12" r="7.3" fill="url(#kn101)"/><circle cx="30.7" cy="12" r="7.3" fill="url(#kn101)"/><circle cx="13.7" cy="12" r="6.6" fill="none" stroke="#cfcfcf" stroke-opacity="0.5" stroke-width="0.8"/><circle cx="30.7" cy="12" r="6.6" fill="none" stroke="#cfcfcf" stroke-opacity="0.5" stroke-width="0.8"/></svg>
<div class="t fl" style="left:160px;top:465.6px;width:28px;text-align:right">0</div>
<div class="t fl" style="left:160px;top:477.5px;width:28px;text-align:right">-3</div>
<div class="t fl" style="left:160px;top:489.5px;width:28px;text-align:right">-7</div>
<div class="t fl" style="left:160px;top:501.4px;width:28px;text-align:right">-12</div>
<div class="t fl" style="left:160px;top:513.4px;width:28px;text-align:right">-15</div>
<div class="t fl" style="left:160px;top:525.3px;width:28px;text-align:right">-20</div>
<div class="t fl" style="left:160px;top:537.2px;width:28px;text-align:right">-30</div>
<div class="t fl" style="left:160px;top:549.2px;width:28px;text-align:right">-40</div>
<div class="t fl" style="left:160px;top:561.1px;width:28px;text-align:right">-50</div>
<div class="a" style="left:190px;top:464px;width:14px;height:106px;background:#3c3c3c"></div>
<div class="a" style="left:190.6px;top:464px;width:1.7px;height:106px;background:linear-gradient(180deg,#f01010 0,#f01010 3px,#f08010 5px,#e8e010 8px,#80e010 12px,#10d010 16px,#10c810 100%)"></div>
<div class="a" style="left:201.7px;top:464px;width:1.7px;height:106px;background:linear-gradient(180deg,#f01010 0,#f01010 3px,#f08010 5px,#e8e010 8px,#80e010 12px,#10d010 16px,#10c810 100%)"></div>
<div class="a" style="left:192.2px;top:464px;width:3.7px;height:106px;background:#262626"></div>
<div class="a" style="left:198px;top:464px;width:3.7px;height:106px;background:#262626"></div>
<div class="a" style="left:118px;top:573px;width:85px;height:1.5px;background:#e0e0e0"></div>
<div class="t" style="left:118.6px;top:579px;width:85px;text-align:center;font-size:12px;color:#f0f0f0;letter-spacing:-0.16px">Out [dB]</div>
<div class="t fl" style="left:217px;top:467.5px;width:20px;text-align:right">+6</div>
<div class="t fl" style="left:217px;top:515px;width:20px;text-align:right">-27</div>
<div class="t fl" style="left:217px;top:562.5px;width:20px;text-align:right">-60</div>
<div class="a" style="left:246px;top:464px;width:5px;height:106px;background:#5c5c5c"></div>
<div class="a" style="left:246px;top:464px;width:5px;height:18px;background:#262626"></div>
<div class="a" style="left:263px;top:464px;width:5px;height:106px;background:#5c5c5c"></div>
<div class="a" style="left:263px;top:464px;width:5px;height:18px;background:#262626"></div>
<svg class="a" style="left:235px;top:470px" width="45" height="26"><defs><linearGradient id="kn205" x1="0" y1="0" x2="0" y2="1"><stop offset="0" stop-color="#bdbdbd"/><stop offset="1" stop-color="#979797"/></linearGradient></defs><circle cx="13.7" cy="12.6" r="8.3" fill="#262626" opacity="0.7"/><circle cx="30.7" cy="12.6" r="8.3" fill="#262626" opacity="0.7"/><circle cx="13.7" cy="12" r="7.3" fill="url(#kn205)"/><circle cx="30.7" cy="12" r="7.3" fill="url(#kn205)"/><circle cx="13.7" cy="12" r="6.6" fill="none" stroke="#cfcfcf" stroke-opacity="0.5" stroke-width="0.8"/><circle cx="30.7" cy="12" r="6.6" fill="none" stroke="#cfcfcf" stroke-opacity="0.5" stroke-width="0.8"/></svg>
<div class="a" style="left:222px;top:573px;width:52px;height:1.5px;background:#e0e0e0"></div>
<div class="t" style="left:221.6px;top:579px;width:52px;text-align:center;font-size:12px;color:#f0f0f0;letter-spacing:-0.23px">Mon [dB]</div>
<svg class="a" style="left:300px;top:448px" width="431" height="150" viewBox="300 448 431 150">
<defs><linearGradient id="tb" x1="0" y1="0" x2="0" y2="1"><stop offset="0" stop-color="#5a5a5a"/><stop offset="1" stop-color="#424242"/></linearGradient><linearGradient id="hl" x1="0" y1="0" x2="0" y2="1"><stop offset="0" stop-color="#7a7a7a"/><stop offset="0.55" stop-color="#555" stop-opacity="0"/></linearGradient></defs>
<g fill="url(#tb)" stroke="#262626" stroke-width="1.2">
<circle cx="346.2" cy="493" r="29.2"/>
<circle cx="411.5" cy="493" r="29.2"/>
<circle cx="476.2" cy="493" r="29.2"/>
<circle cx="395.1" cy="542" r="12.3"/>
<circle cx="427.2" cy="542" r="12.3"/>
<rect x="382.8" y="561.8" width="56.8" height="24.8" rx="12.4"/>
<circle cx="545.2" cy="485" r="21.2"/>
<rect x="524.0" y="512.4" width="42.4" height="25.1" rx="12.5"/>
<rect x="524.0" y="561.6" width="42.4" height="25.1" rx="12.5"/>
<circle cx="593.5" cy="485" r="21.2"/>
<rect x="572.3" y="512.4" width="42.4" height="25.1" rx="12.5"/>
<rect x="572.3" y="561.6" width="42.4" height="25.1" rx="12.5"/>
<circle cx="641.5" cy="485" r="21.2"/>
<rect x="620.3" y="512.4" width="42.4" height="25.1" rx="12.5"/>
<rect x="620.3" y="561.6" width="42.4" height="25.1" rx="12.5"/>
<circle cx="689.6" cy="485" r="21.2"/>
<rect x="668.4" y="512.4" width="42.4" height="25.1" rx="12.5"/>
<rect x="668.4" y="561.6" width="42.4" height="25.1" rx="12.5"/>
</g>
<g fill="none" stroke="url(#hl)" stroke-width="1">
<circle cx="346.2" cy="493" r="28.1"/>
<circle cx="411.5" cy="493" r="28.1"/>
<circle cx="476.2" cy="493" r="28.1"/>
<circle cx="395.1" cy="542" r="11.2"/>
<circle cx="427.2" cy="542" r="11.2"/>
<rect x="383.9" y="562.9" width="54.6" height="22.6" rx="11.3"/>
<circle cx="545.2" cy="485" r="20.1"/>
<rect x="525.1" y="513.5" width="40.2" height="22.9" rx="11.4"/>
<rect x="525.1" y="562.7" width="40.2" height="22.9" rx="11.4"/>
<circle cx="593.5" cy="485" r="20.1"/>
<rect x="573.4" y="513.5" width="40.2" height="22.9" rx="11.4"/>
<rect x="573.4" y="562.7" width="40.2" height="22.9" rx="11.4"/>
<circle cx="641.5" cy="485" r="20.1"/>
<rect x="621.4" y="513.5" width="40.2" height="22.9" rx="11.4"/>
<rect x="621.4" y="562.7" width="40.2" height="22.9" rx="11.4"/>
<circle cx="689.6" cy="485" r="20.1"/>
<rect x="669.5" y="513.5" width="40.2" height="22.9" rx="11.4"/>
<rect x="669.5" y="562.7" width="40.2" height="22.9" rx="11.4"/>
</g>
<circle cx="346.5" cy="493" r="9" fill="#6c6c6c"/>
<path d="M404.4 482.2V503.8L424.3 493Z" fill="#7cc030"/>
<rect x="466.7" y="483.9" width="18.5" height="18.2" fill="#cccccc"/>
<path d="M390 537L386 542L390 547M394.5 537L390.5 542L394.5 547" fill="none" stroke="#8c8c8c" stroke-width="1.6"/>
<path d="M424 537L428 542L424 547M428.5 537L432.5 542L428.5 547" fill="none" stroke="#8c8c8c" stroke-width="1.6"/>
<text x="411.2" y="579" font-size="12.5" fill="#dcdcdc" text-anchor="middle" font-family="Liberation Sans">SCRUB</text>
<path d="M536 478.4V492L546.6 485.2Z" fill="#d4d4d4"/><rect x="549.7" y="478.4" width="4.7" height="13.6" fill="#d4d4d4"/>
<rect x="584.1" y="478.4" width="4.9" height="13.6" fill="#d4d4d4"/><path d="M594.7 478.4V492L605.2 485.2Z" fill="#d4d4d4"/>
<rect x="630" y="478.4" width="1.6" height="13.6" fill="#747474"/><path d="M635.7 478.4V492L647.4 485.2Z" fill="#747474"/><rect x="650" y="478.4" width="1.6" height="13.6" fill="#747474"/>
<path d="M673.2 478.4V492L683.2 485.2Z" fill="#747474"/><rect x="685.5" y="478.4" width="1.6" height="13.6" fill="#747474"/><rect x="690" y="478.4" width="1.6" height="13.6" fill="#747474"/><path d="M695.4 478.4V492L706.7 485.2Z" fill="#747474"/>
<path d="M549.60 521.6H554.35A3.45 3.45 0 0 1 554.35 528.5H537.15A3.45 3.45 0 0 1 537.15 521.6H542.20" fill="none" stroke="#dcdcdc" stroke-width="2.1"/>
<path d="M542.10 517.7L547.10 521.3L542.10 524.9Z" fill="#dcdcdc"/>
<path d="M597.90 521.6H602.65A3.45 3.45 0 0 1 602.65 528.5H585.45A3.45 3.45 0 0 1 585.45 521.6H590.50" fill="none" stroke="#dcdcdc" stroke-width="2.1"/>
<path d="M590.40 517.7L595.40 521.3L590.40 524.9Z" fill="#dcdcdc"/>
<path d="M645.90 521.6H650.65A3.45 3.45 0 0 1 650.65 528.5H633.45A3.45 3.45 0 0 1 633.45 521.6H638.50" fill="none" stroke="#dcdcdc" stroke-width="2.1"/>
<path d="M638.40 517.7L643.40 521.3L638.40 524.9Z" fill="#dcdcdc"/>
<path d="M694.00 521.6H698.75A3.45 3.45 0 0 1 698.75 528.5H681.55A3.45 3.45 0 0 1 681.55 521.6H686.60" fill="none" stroke="#dcdcdc" stroke-width="2.1"/>
<path d="M686.50 517.7L691.50 521.3L686.50 524.9Z" fill="#dcdcdc"/>
<path d="M545.6 569.2L550.9 574.5L545.6 579.8L540.3 574.5Z" fill="#707070"/><path d="M555.1 565V573.4M550.9 569.2H559.3" stroke="#707070" stroke-width="2"/>
<path d="M593.5 569.2L598.8 574.5L593.5 579.8L588.2 574.5Z" fill="#707070"/><path d="M599.3 569.2H606.8" stroke="#707070" stroke-width="2"/>
<path d="M638.5 567.5V581L645.5 574.2Z" fill="#d4d4d4"/>
<path d="M692.5 567.5V581L685.5 574.2Z" fill="#d4d4d4"/>
</svg>
<div class="a" style="left:777px;top:448px;width:161px;height:24px;background:#2e2e2e"></div>
<div class="a" style="left:777px;top:471px;width:161px;height:1px;background:#444"></div>
<div class="a" style="left:820px;top:448px;width:1px;height:23px;background:#444"></div>
<div class="a" style="left:887px;top:448px;width:1px;height:23px;background:#444"></div>
<div class="t" style="left:745px;top:454px;font-size:12px;color:#f0f0f0">Edit</div>
<div class="t" style="left:786.9px;top:454px;font-size:12px;color:#f0f0f0;letter-spacing:-0.8px">Type</div>
<div class="t" style="left:830.5px;top:454px;font-size:12px;color:#f0f0f0;letter-spacing:-0.47px">Separate</div>
<div class="t" style="left:898px;top:454px;font-size:12px;color:#f0f0f0">Clip &amp; In</div>
<div class="a" style="left:843px;top:489px;width:1px;height:80px;background:#4e4e4e"></div>
<div class="a" style="left:934px;top:489px;width:1px;height:80px;background:#4e4e4e"></div>
<svg class="a" style="left:760px;top:498px" width="170" height="40" viewBox="760 498 170 40">
 <rect x="766" y="502" width="23" height="15.5" fill="#cfcfcf"/><rect x="808" y="502" width="22" height="15.5" fill="#cfcfcf"/>
 <rect x="789.5" y="510.5" width="18" height="13.5" fill="none" stroke="#cfcfcf" stroke-width="1.2"/>
 <path d="M791.3 526.8H805L798.2 534.4Z" fill="#cfcfcf"/>
 <rect x="857.5" y="510.5" width="18" height="13.5" fill="none" stroke="#cfcfcf" stroke-width="1.2"/>
 <rect x="902.5" y="510.5" width="18" height="13.5" fill="none" stroke="#cfcfcf" stroke-width="1.2"/>
 <rect x="876" y="502" width="26" height="15.5" fill="#cfcfcf"/>
 <path d="M860 526.8H873.8L867 534.4Z" fill="#cfcfcf"/><path d="M904.5 526.8H918.3L911.4 534.4Z" fill="#cfcfcf"/>
</svg>
<div class="t" style="left:772.9px;top:540px;font-size:12px;color:#f0f0f0;letter-spacing:-0.26px">Cut inside</div>
<div class="t" style="left:859.3px;top:540px;font-size:12px;color:#f0f0f0;letter-spacing:-0.09px">Cut outside</div>
<div class="a" style="left:1px;top:598px;width:937px;height:3px;background:#6c1c6c"></div>
<div class="a" style="left:1px;top:601px;width:937px;height:25px;background:#2e2e2e"></div>
<div class="a" style="left:1px;top:601px;width:73px;height:25px;background:#6c1c6c"></div>
<div class="a" style="left:166px;top:601px;width:1px;height:25px;background:#444"></div>
<div class="a" style="left:254px;top:601px;width:1px;height:25px;background:#444"></div>
<div class="a" style="left:333px;top:601px;width:1px;height:25px;background:#444"></div>
<div class="t" style="left:10.6px;top:608px;font-size:12px;color:#f0f0f0;letter-spacing:-0.29px">MultiTrack</div>
<div class="t" style="left:84.2px;top:608px;font-size:12px;color:#f0f0f0;letter-spacing:-0.33px">Reporter Box</div>
<div class="t" style="left:173.0px;top:608px;font-size:12px;color:#f0f0f0;letter-spacing:-0.25px">Record Mode</div>
<div class="t" style="left:264.0px;top:608px;font-size:12px;color:#f0f0f0;letter-spacing:-0.55px">SingleTrack</div>
<div class="a" style="left:1px;top:626px;width:937px;height:19px;background:#1c1c1c"></div>
<div class="t" style="left:4.0px;top:631px;font-size:12px;color:#f0f0f0;letter-spacing:-0.5px">Ready, Free phys. memory: 10551 MBytes</div>
<div class="t" style="left:590.5px;top:631px;font-size:12px;color:#f0f0f0;letter-spacing:-0.31px">Pipe: disabled</div>
<div class="t" style="left:668.0px;top:631px;font-size:12px;color:#f0f0f0;letter-spacing:-0.5px">User: NNI</div>
<div class="t" style="left:722.5px;top:631px;font-size:12px;color:#f0f0f0;letter-spacing:-0.18px">Undo level: 1 of 1</div>
<div class="t" style="left:819.0px;top:631px;font-size:12px;color:#f0f0f0;letter-spacing:-0.8px">Tracks: 4</div>
<div class="t" style="left:868.3px;top:631px;font-size:12px;color:#f0f0f0;letter-spacing:-0.61px">Objects: 2</div>
<div class="a" style="left:587px;top:628px;width:1px;height:16px;background:#5a5a5a"></div>
<div class="a" style="left:665px;top:628px;width:1px;height:16px;background:#5a5a5a"></div>
<div class="a" style="left:718px;top:628px;width:1px;height:16px;background:#5a5a5a"></div>
<div class="a" style="left:814px;top:628px;width:1px;height:16px;background:#5a5a5a"></div>
<div class="a" style="left:864px;top:628px;width:1px;height:16px;background:#5a5a5a"></div>
<div class="a" style="left:921px;top:628px;width:1px;height:16px;background:#5a5a5a"></div>
<svg class="a" style="left:926px;top:634px" width="11" height="11"><g fill="#bbb"><rect x="8" y="1" width="2" height="2"/><rect x="5" y="4" width="2" height="2"/><rect x="8" y="4" width="2" height="2"/><rect x="2" y="7" width="2" height="2"/><rect x="5" y="7" width="2" height="2"/><rect x="8" y="7" width="2" height="2"/></g></svg>
<div class="a" style="left:0;top:0;width:939px;height:1px;background:#2b7c9f"></div>
<div class="a" style="left:0;top:645px;width:939px;height:1px;background:#2b7c9f"></div>
<div class="a" style="left:0;top:0;width:1px;height:646px;background:#2b7c9f"></div>
<div class="a" style="left:938px;top:0;width:1px;height:646px;background:#2b7c9f"></div>
</body></html>
